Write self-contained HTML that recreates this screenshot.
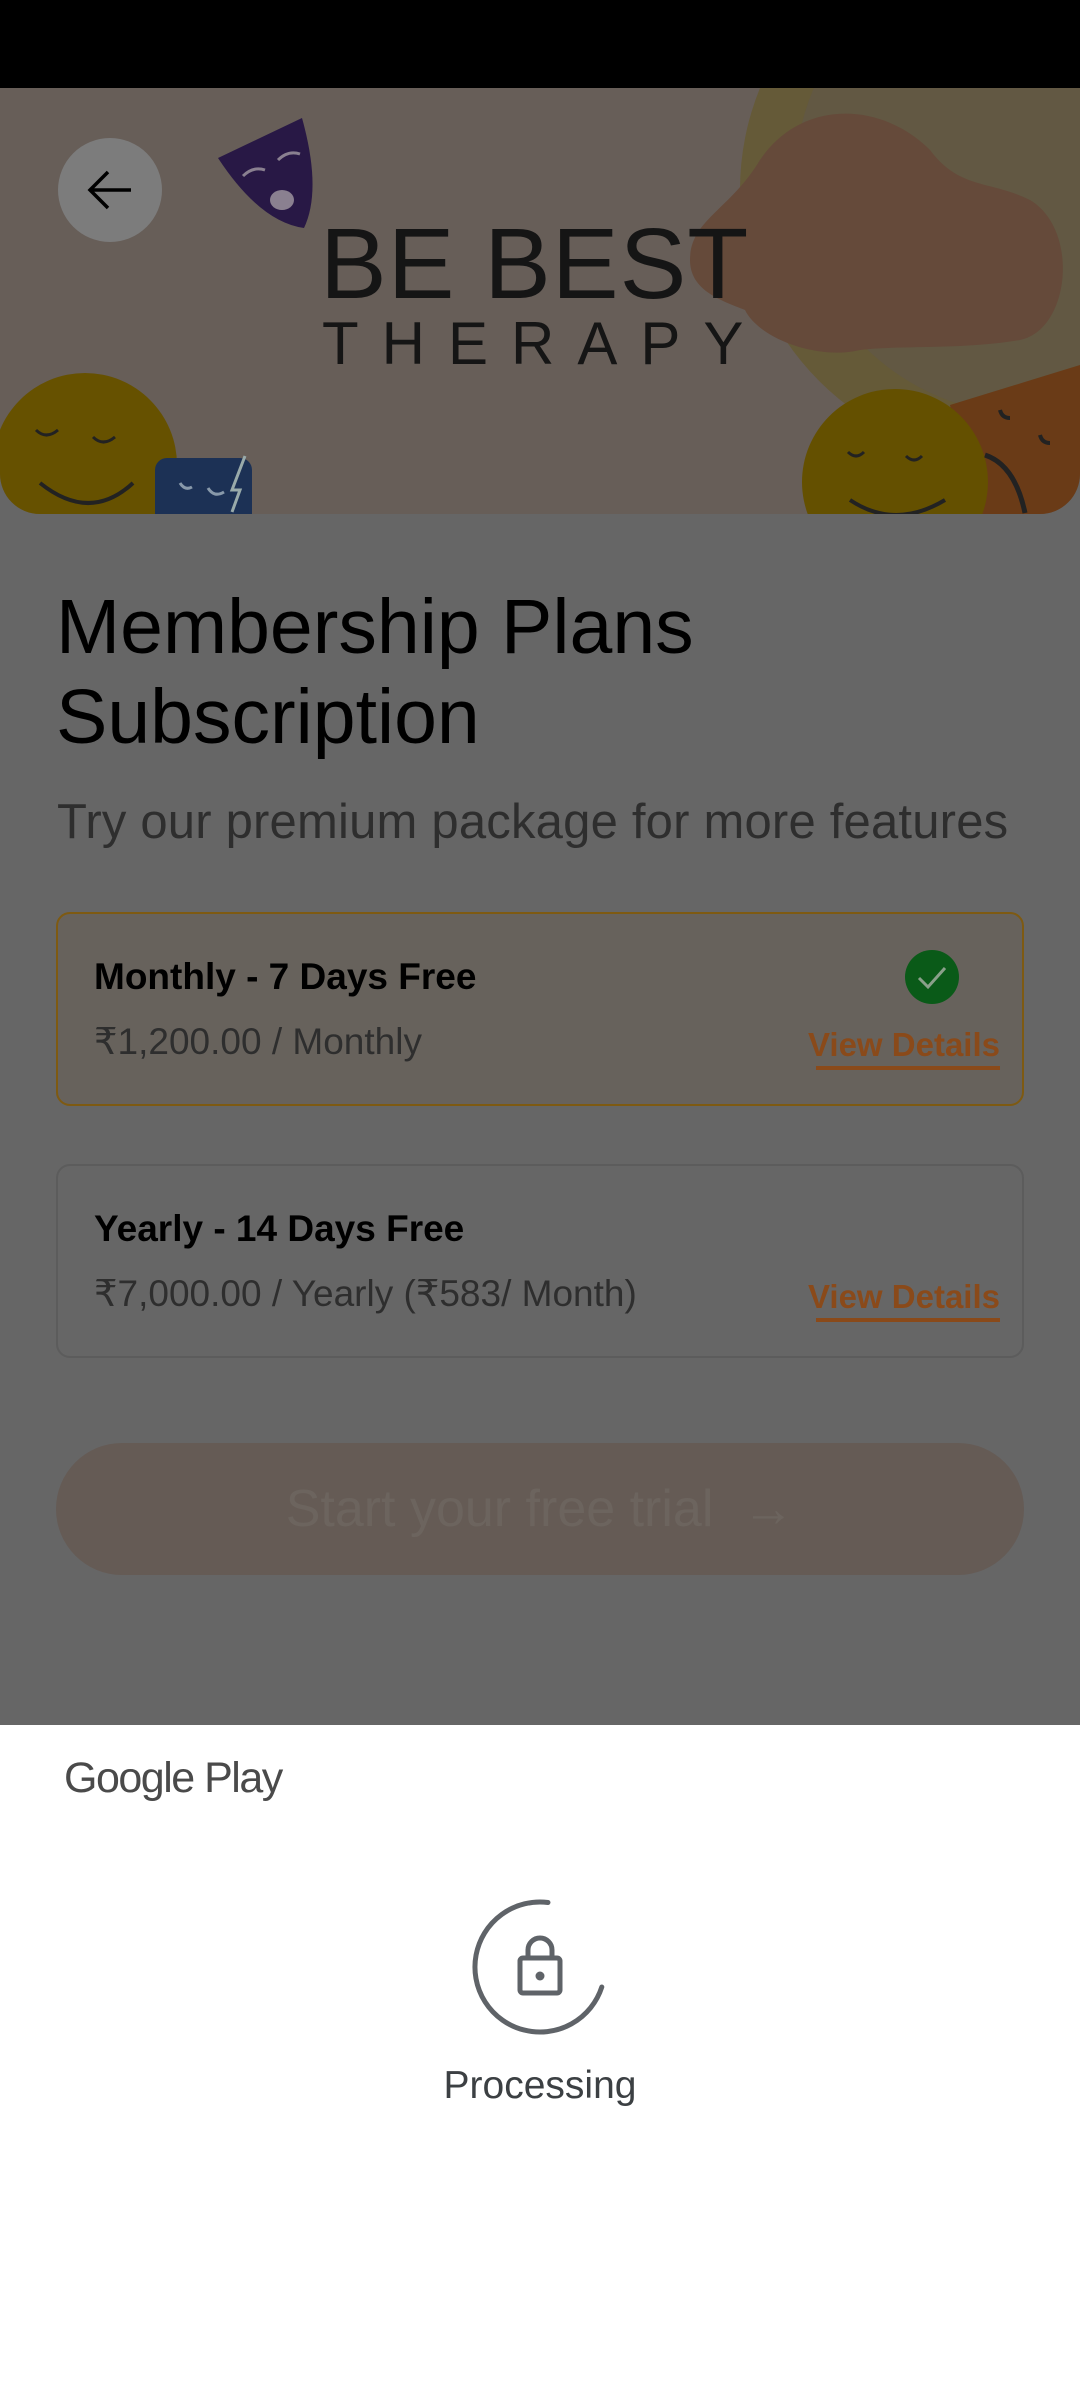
<!DOCTYPE html>
<html><head><meta charset="utf-8"><style>
*{margin:0;padding:0;box-sizing:border-box}
body{width:1080px;height:2408px;background:#666;position:relative;overflow:hidden;font-family:"Liberation Sans",sans-serif}
.abs{position:absolute;white-space:nowrap}
</style></head><body>
<div class="abs" style="left:0;top:0;width:1080px;height:88px;background:#000"></div>
<div class="abs" style="left:0;top:88px;width:1080px;height:426px;background:#675e58;border-radius:0 0 40px 40px;overflow:hidden">
<svg width="1080" height="426" viewBox="0 88 1080 426" style="position:absolute;left:0;top:0">
<circle cx="1010" cy="190" r="270" fill="#655a38"/>
<circle cx="1030" cy="180" r="235" fill="#625843"/>
<path d="M760 160 C800 100 880 100 930 150 C960 190 990 180 1030 200 C1080 230 1070 330 1020 340 C960 350 900 345 860 350 C820 360 760 340 745 310 C720 300 690 290 690 260 C690 220 730 210 760 160Z" fill="#654a3a"/>
<path d="M950 405 L1080 365 L1080 514 L975 514Z" fill="#6a3b17"/>
<circle cx="895" cy="482" r="93" fill="#645000"/>
<path d="M848 452 q8 8 16 0 M906 456 q8 8 16 0" stroke="#222" stroke-width="3" fill="none"/>
<path d="M850 500 q45 30 95 0" stroke="#222" stroke-width="4" fill="none"/>
<path d="M1000 410 q2 8 10 8 M1040 435 q2 8 10 8" stroke="#222" stroke-width="4" fill="none"/>
<path d="M985 455 q30 10 40 58" stroke="#222" stroke-width="5" fill="none"/>
<circle cx="85" cy="465" r="92" fill="#665100"/>
<path d="M36 430 q10 10 22 0 M93 437 q10 10 22 0" stroke="#222" stroke-width="3" fill="none"/>
<path d="M40 483 q50 40 93 0" stroke="#222" stroke-width="4" fill="none"/>
<rect x="155" y="458" width="97" height="70" rx="12" fill="#1c3155"/>
<path d="M180 483 q5 8 12 4 M208 488 q6 10 16 4" stroke="#8899aa" stroke-width="3" fill="none"/>
<path d="M245 456 L232 490 L240 490 L232 512" stroke="#9aa" stroke-width="3" fill="none"/>
<path d="M218 158 L302 118 Q322 190 304 228 Q260 222 218 158Z" fill="#281845"/>
<ellipse cx="282" cy="200" rx="12" ry="10" fill="#8a8090"/>
<path d="M243 176 q10-10 22-6 M278 160 q10-10 22-6" stroke="#8a8090" stroke-width="3" fill="none"/>
<circle cx="110" cy="190" r="52" fill="#7c7c7c"/>
<path d="M131 190 H91 M108 172 L90 190 L108 208" stroke="#000" stroke-width="3.5" fill="none"/>
</svg>
<div class="abs" style="left:320px;top:126px;font-size:100px;line-height:100px;color:#151515;letter-spacing:1px;transform:scaleX(1.0)">BE BEST</div>
<div class="abs" style="left:322px;top:226px;font-size:60px;line-height:60px;color:#151515;letter-spacing:23px">THERAPY</div>
</div>
<div class="abs" style="left:56px;top:582px;font-size:77px;line-height:90px;color:#000">Membership Plans<br>Subscription</div>
<div class="abs" style="left:57px;top:795px;font-size:49px;line-height:54px;color:#2e2e2e;letter-spacing:0.2px">Try our premium package for more features</div>

<div class="abs" style="left:56px;top:912px;width:968px;height:194px;border:2px solid #7e5a12;border-radius:14px;background:#67625c"></div>
<div class="abs" style="left:94px;top:956px;font-size:37px;font-weight:bold;color:#000">Monthly - 7 Days Free</div>
<div class="abs" style="left:94px;top:1020px;font-size:37px;color:#2e2e2e">₹1,200.00 / Monthly</div>
<div class="abs" style="left:905px;top:950px;width:54px;height:54px;border-radius:50%;background:#0a5a18"></div>
<svg class="abs" style="left:905px;top:950px" width="54" height="54"><path d="M14 28 L23 37 L40 18" stroke="#8aa08a" stroke-width="3" fill="none"/></svg>
<div class="abs" style="left:780px;top:1026px;width:220px;text-align:right;font-size:33px;font-weight:bold;color:#8a4a1a">View Details</div>
<div class="abs" style="left:816px;top:1066px;width:184px;height:4px;background:#8a4a1a"></div>

<div class="abs" style="left:56px;top:1164px;width:968px;height:194px;border:2px solid #5c5c5c;border-radius:14px;background:#666"></div>
<div class="abs" style="left:94px;top:1208px;font-size:37px;font-weight:bold;color:#000">Yearly - 14 Days Free</div>
<div class="abs" style="left:94px;top:1272px;font-size:37px;color:#2e2e2e">₹7,000.00 / Yearly (₹583/ Month)</div>
<div class="abs" style="left:780px;top:1278px;width:220px;text-align:right;font-size:33px;font-weight:bold;color:#8a4a1a">View Details</div>
<div class="abs" style="left:816px;top:1318px;width:184px;height:4px;background:#8a4a1a"></div>

<div class="abs" style="left:56px;top:1443px;width:968px;height:132px;border-radius:66px;background:#655b55"></div>
<div class="abs" style="left:56px;top:1443px;width:968px;height:132px;line-height:132px;text-align:center;font-size:52px;color:#6c645e">Start your free trial &nbsp;→</div>

<div class="abs" style="left:0;top:1725px;width:1080px;height:683px;background:#fff"></div>
<div class="abs" style="left:64px;top:1752px;font-size:43px;line-height:52px;color:#4a4a4a;letter-spacing:-1.5px">Google Play</div>
<svg class="abs" style="left:0;top:1880px" width="1080" height="200" viewBox="0 1880 1080 200">
<path d="M548 1902.5 A65 65 0 1 0 601.8 1987" stroke="#5f6368" stroke-width="5" fill="none" stroke-linecap="round"/>
<rect x="520" y="1958" width="40" height="35" rx="3" stroke="#5f6368" stroke-width="5" fill="none"/>
<path d="M528 1958 V1950 a12 12 0 0 1 24 0 V1958" stroke="#5f6368" stroke-width="5" fill="none"/>
<circle cx="540" cy="1976" r="4.5" fill="#5f6368"/>
</svg>
<div class="abs" style="left:0;top:2064px;width:1080px;text-align:center;font-size:39px;color:#3c4043">Processing</div>
</body></html>
